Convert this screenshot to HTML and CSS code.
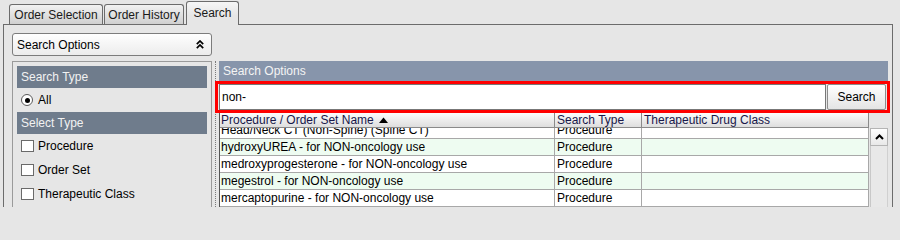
FILE: index.html
```html
<!DOCTYPE html>
<html>
<head>
<meta charset="utf-8">
<link rel="stylesheet" href="styles.css">
</head>
<body>
<div class="tabs">
  <div class="tab t1">Order Selection</div>
  <div class="tab t2">Order History</div>
  <div class="tab active">Search</div>
</div>
<div class="panel">
  <div class="combo">
    <span>Search Options</span>
    <svg class="chev2" width="8" height="9" viewBox="0 0 8 9"><path d="M0.8 4.2 L4 1 L7.2 4.2 M0.8 8.2 L4 5 L7.2 8.2" fill="none" stroke="#000" stroke-width="1.7"/></svg>
  </div>
  <div class="main">
    <div class="leftbox">
      <div class="lhead">Search Type</div>
      <div class="opt"><span class="radio"><span class="dot"></span></span>All</div>
      <div class="lhead">Select Type</div>
      <div class="opt"><span class="check"></span>Procedure</div>
      <div class="opt"><span class="check"></span>Order Set</div>
      <div class="opt"><span class="check"></span>Therapeutic Class</div>
    </div>
    <div class="splitter"><div class="dots"></div></div>
    <div class="right">
      <div class="rhead">Search Options</div>
      <div class="searchrow">
        <div class="input">non-</div>
        <div class="btn">Search</div>
      </div>
      <div class="tablearea">
        <div class="table">
          <div class="thead">
            <div class="c c1">Procedure / Order Set Name <svg class="sort" width="9" height="6" viewBox="0 0 9 6"><path d="M0 6 L4.5 0.5 L9 6 Z" fill="#000"/></svg></div>
            <div class="c c2">Search Type</div>
            <div class="c c3">Therapeutic Drug Class</div>
          </div>
          <div class="tbody">
            <div class="row first"><div class="c c1">Head/Neck CT (Non-Spine) (Spine CT)</div><div class="c c2">Procedure</div><div class="c c3"></div></div>
            <div class="row alt"><div class="c c1">hydroxyUREA - for NON-oncology use</div><div class="c c2">Procedure</div><div class="c c3"></div></div>
            <div class="row"><div class="c c1">medroxyprogesterone - for NON-oncology use</div><div class="c c2">Procedure</div><div class="c c3"></div></div>
            <div class="row alt"><div class="c c1">megestrol - for NON-oncology use</div><div class="c c2">Procedure</div><div class="c c3"></div></div>
            <div class="row"><div class="c c1">mercaptopurine - for NON-oncology use</div><div class="c c2">Procedure</div><div class="c c3"></div></div>
            <div class="row alt"><div class="c c1"></div><div class="c c2"></div><div class="c c3"></div></div>
          </div>
        </div>
        <div class="vscroll">
          <div class="sbtn"><svg width="9" height="6" viewBox="0 0 9 6"><path d="M1 5 L4.5 1.5 L8 5" fill="none" stroke="#000" stroke-width="2"/></svg></div>
          <div class="track"></div>
        </div>
      </div>
    </div>
  </div>
</div>
</body>
</html>
```
FILE: styles.css
```css
html, body {
  margin: 0;
  padding: 0;
  height: 207px;
  overflow: hidden;
}
body {
  background: #e6e6e6;
  font-family: "Liberation Sans", Arial, sans-serif;
  font-size: 12px;
  color: #000;
  display: flex;
  flex-direction: column;
}
.tabs {
  height: 24px;
  display: flex;
  align-items: flex-end;
  padding-left: 9px;
  position: relative;
  z-index: 2;
}
.tab {
  box-sizing: border-box;
  height: 20px;
  border: 1px solid #6c6c6c;
  border-bottom: none;
  border-radius: 3px 3px 0 0;
  background: linear-gradient(#f2f2f2, #d0d0d0);
  color: #1a1a1a;
  text-align: center;
  line-height: 20px;
  font-size: 12px;
}
.t1 { width: 94px; }
.t2 { width: 80px; margin-left: 1px; }
.active {
  width: 53px;
  margin-left: 2px;
  height: 24px;
  margin-bottom: -1px;
  background: linear-gradient(#f6f6f6, #e6e6e6 60%);
  line-height: 22px;
}
.panel {
  flex: 1;
  margin: 0 7px 0 3px;
  border: 1px solid #6c6c6c;
  border-bottom: none;
  padding: 8px 4px 0 8px;
  display: flex;
  flex-direction: column;
  min-height: 0;
}
.combo {
  box-sizing: border-box;
  width: 200px;
  height: 23px;
  border: 1px solid #7c7c7c;
  border-radius: 3px;
  background: linear-gradient(#fefefe, #ececec);
  display: flex;
  align-items: center;
  justify-content: space-between;
  padding: 0 7px 0 4px;
}
.chev2 { display: block; }
.main {
  flex: 1;
  display: flex;
  margin-top: 5px;
  min-height: 0;
}
.leftbox {
  box-sizing: border-box;
  width: 200px;
  border: 1px solid #9a9a9a;
  border-bottom: none;
  padding: 4px 4px 0 4px;
}
.lhead {
  height: 22px;
  line-height: 22px;
  background: #6f7c8c;
  color: #f2f2f2;
  padding-left: 4px;
}
.opt {
  height: 24px;
  display: flex;
  align-items: center;
  padding-left: 4px;
}
.radio {
  box-sizing: border-box;
  width: 12px;
  height: 12px;
  border: 1px solid #5a5a5a;
  border-radius: 50%;
  background: #fff;
  margin-right: 5px;
  display: flex;
  align-items: center;
  justify-content: center;
}
.dot {
  width: 5px;
  height: 5px;
  border-radius: 50%;
  background: #000;
}
.check {
  box-sizing: border-box;
  width: 13px;
  height: 12px;
  border: 1px solid #6a6a6a;
  background: #fff;
  margin-right: 4px;
}
.splitter {
  width: 7px;
  display: flex;
  justify-content: center;
}
.dots {
  width: 0;
  border-left: 1px dotted #7a7a7a;
}
.right {
  flex: 1;
  display: flex;
  flex-direction: column;
  min-width: 0;
}
.rhead {
  height: 20px;
  line-height: 20px;
  background: #8795ab;
  color: #f4f4f4;
  padding-left: 4px;
}
.searchrow {
  box-sizing: border-box;
  height: 32px;
  margin: 0 -2px 0 -4px;
  border: 3px solid #ff0000;
  display: flex;
}
.input {
  flex: 1;
  box-sizing: border-box;
  margin-left: 1px;
  height: 26px;
  border: 1px solid #777;
  background: #fff;
  line-height: 24px;
  padding-left: 2px;
}
.btn {
  box-sizing: border-box;
  width: 59px;
  height: 26px;
  margin: 0 1px;
  border: 1px solid #8c8c8c;
  border-radius: 2px;
  background: linear-gradient(#ffffff, #e4e4e4);
  text-align: center;
  line-height: 24px;
}
.tablearea {
  flex: 1;
  display: flex;
  min-height: 0;
}
.table {
  width: 650px;
  display: flex;
  flex-direction: column;
  border-left: 1px solid #555;
  box-sizing: border-box;
}
.thead {
  display: flex;
  height: 14px;
  background: linear-gradient(#fcfcfc, #dedede);
  border-bottom: 1px solid #8a8a8a;
  color: #18184a;
}
.thead .c {
  line-height: 14px;
  border-right: 1px solid #8a8a8a;
}
.c {
  box-sizing: border-box;
  padding-left: 2px;
  white-space: nowrap;
  overflow: hidden;
}
.c1 { width: 335px; padding-left: 1px; }
.c2 { width: 87px; }
.c3 { width: 227px; }
.sort { margin-left: 2px; vertical-align: 1px; }
.tbody {
  flex: 1;
  overflow: hidden;
  background: #fff;
}
.row {
  display: flex;
  height: 17px;
  border-bottom: 1px solid #a8a8a8;
  box-sizing: border-box;
  background: #fff;
}
.row.alt { background: #eefcf1; }
.row.first { margin-top: -6px; }
.row .c {
  line-height: 16px;
  border-right: 1px solid #a8a8a8;
}
.vscroll {
  width: 18px;
  margin-left: 1px;
  padding-top: 15px;
  display: flex;
  flex-direction: column;
}
.sbtn {
  box-sizing: border-box;
  height: 18px;
  border: 1px solid #b4b4b4;
  background: linear-gradient(#ffffff, #e8e8e8);
  display: flex;
  align-items: center;
  justify-content: center;
}
.track {
  flex: 1;
  background: #e8e8e8;
  border-left: 1px solid #c8c8c8;
  border-right: 1px solid #d0d0d0;
}
```
